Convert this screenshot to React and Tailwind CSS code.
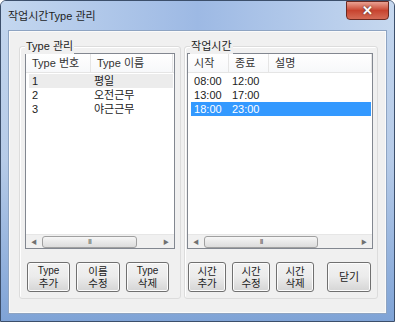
const FONT = { fontFamily: '"Liberation Sans", "Noto Sans CJK KR", sans-serif' };

function ScrollBar({ thumbLeft, thumbWidth }) {
  return (
    <div className="relative h-[14px] bg-[#f0f0f0] border-t border-[#e6e6e6]">
      <span className="absolute left-[5px] top-[3px] text-[6px] leading-[8px] text-[#707070]">◀</span>
      <div
        className="absolute top-[1px] h-[12px] rounded-[3px] border border-[#a0a0a0] bg-gradient-to-b from-[#f6f6f6] to-[#dcdcdc] flex items-center justify-center"
        style={{ left: thumbLeft, width: thumbWidth }}
      >
        <span className="text-[7px] leading-[8px] text-[#666] tracking-[-1px]">III</span>
      </div>
      <span className="absolute right-[5px] top-[3px] text-[6px] leading-[8px] text-[#707070]">▶</span>
    </div>
  );
}

function ListView({ columns, rows, selected, hover, thumbLeft, thumbWidth }) {
  return (
    <div className="flex flex-col h-[196px] border border-[#828790] bg-white">
      <div className="flex h-[19px] border-b border-[#e5e5e5] bg-gradient-to-b from-white to-[#f7f8fa] text-[11px] text-[#333]">
        {columns.map((c, i) => (
          <div
            key={i}
            className="flex items-center pl-[6px] border-r border-[#e5e5e5]"
            style={{ width: c.w }}
          >
            {c.label}
          </div>
        ))}
      </div>
      <div className="flex-1 pt-[1px] pl-[3px] pr-[1px]">
        {rows.map((r, i) => (
          <div
            key={i}
            className={
              "flex h-[14px] items-center text-[11px] leading-[14px] " +
              (i === selected
                ? "bg-[#3399ff] text-white"
                : i === hover
                ? "bg-[#ececec] text-[#222]"
                : "text-[#222]")
            }
          >
            {r.map((cell, j) => (
              <div
                key={j}
                className="pl-[3px] whitespace-nowrap"
                style={{ width: columns[j].w - (j === 0 ? 3 : 0) }}
              >
                {cell}
              </div>
            ))}
          </div>
        ))}
      </div>
      <ScrollBar thumbLeft={thumbLeft} thumbWidth={thumbWidth} />
    </div>
  );
}

function Btn({ lines, w = "w-[43px]" }) {
  return (
    <button
      className={
        w +
        " h-[30px] rounded-[3px] border border-[#707070] bg-gradient-to-b from-[#f2f2f2] via-[#ebebeb] to-[#d5d5d5] text-[#222] flex flex-col items-center justify-center shadow-[inset_0_0_0_1px_#fcfcfc]"
      }
    >
      {lines.map((l, i) => (
        <span
          key={i}
          className={
            "block " +
            (lines.length === 1
              ? "text-[11px] leading-[14px]"
              : l === "Type"
              ? "text-[10px] leading-[12px]"
              : "text-[10.5px] leading-[12.5px]")
          }
        >
          {l}
        </span>
      ))}
    </button>
  );
}

function GroupBox({ title, className, children }) {
  return (
    <div className={"relative border border-[#dcdcdc] rounded-[3px] shadow-[inset_1px_1px_0_#fff] " + className}>
      <span className="absolute left-[5px] top-[-9px] px-[1px] bg-[#f0f0f0] text-[11px] leading-[16px] text-[#222]">
        {title}
      </span>
      {children}
    </div>
  );
}

export default function App() {
  return (
    <div
      className="w-[395px] h-[322px] rounded-t-[6px] border border-[#3c4f6b] bg-gradient-to-b from-[#c3d6ee] via-[#b6cbe8] to-[#7fa3d6] flex flex-col overflow-hidden"
      style={FONT}
    >
      <div className="h-[29px] flex items-start justify-between pl-[7px] pr-[5px] bg-gradient-to-r from-[#c4d7ef] via-[#9db9e4] to-[#c6d8ef]">
        <span className="mt-[7px] text-[11px] leading-[16px] text-[#1e1e1e]">작업시간Type 관리</span>
        <div className="w-[43px] h-[19px] rounded-b-[4px] border border-[#6b2a22] bg-gradient-to-b from-[#e8a193] via-[#c7432f] to-[#d46a55] flex items-center justify-center">
          <span className="text-white text-[13px] font-bold leading-[13px] [text-shadow:0_0_2px_#333]">✕</span>
        </div>
      </div>
      <div className="mx-[7px] h-[284px] border border-[#8ea4c2] bg-[#f0f0f0] flex gap-[3px] pl-[10px] pr-[8px] pt-[15px] pb-[14px] shadow-[inset_0_0_0_1px_#fafafa]">
        <GroupBox title="Type 관리" className="w-[163px] px-[5px] pt-[6px]">
          <ListView
            columns={[
              { label: "Type 번호", w: 65 },
              { label: "Type 이름", w: 82 },
            ]}
            rows={[
              ["1", "평일"],
              ["2", "오전근무"],
              ["3", "야근근무"],
            ]}
            hover={0}
            thumbLeft={16}
            thumbWidth={95}
          />
          <div className="flex gap-[6px] mt-[13px] pl-[2px]">
            <Btn lines={["Type", "추가"]} />
            <Btn lines={["이름", "수정"]} w="w-[44px]" />
            <Btn lines={["Type", "삭제"]} />
          </div>
        </GroupBox>
        <GroupBox title="작업시간" className="w-[195px] px-[2px] pt-[6px]">
          <div className="w-[186px]">
            <ListView
              columns={[
                { label: "시작", w: 41 },
                { label: "종료", w: 40 },
                { label: "설명", w: 103 },
              ]}
              rows={[
                ["08:00", "12:00", ""],
                ["13:00", "17:00", ""],
                ["18:00", "23:00", ""],
              ]}
              selected={2}
              thumbLeft={16}
              thumbWidth={114}
            />
          </div>
          <div className="flex gap-[6px] mt-[13px] pl-[1px]">
            <Btn lines={["시간", "추가"]} w="w-[38px]" />
            <Btn lines={["시간", "수정"]} w="w-[38px]" />
            <Btn lines={["시간", "삭제"]} w="w-[38px]" />
            <div className="ml-[7px]">
              <Btn lines={["닫기"]} w="w-[44px]" />
            </div>
          </div>
        </GroupBox>
      </div>
    </div>
  );
}
